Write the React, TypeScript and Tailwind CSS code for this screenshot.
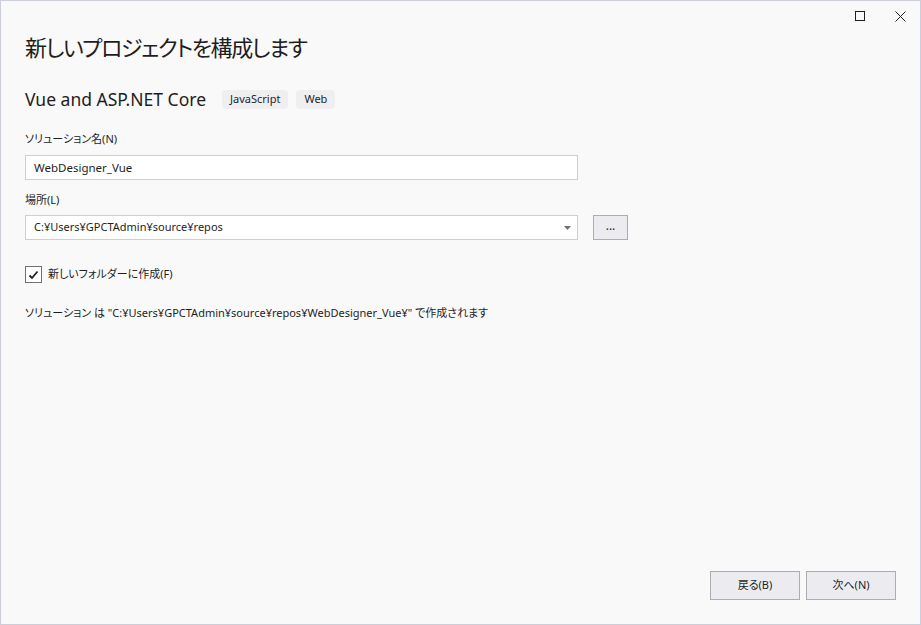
import React from "react";

export default function App() {
  const font = { fontFamily: '"Noto Sans", "Noto Sans CJK JP", sans-serif' };
  return (
    <div
      className="w-[921px] h-[625px] bg-[#f9f9f9] border border-[#cccedb] box-border flex flex-col text-[#1e1e1e] relative overflow-hidden [font-feature-settings:'palt']"
      style={font}
    >
      {/* window controls */}
      <div className="absolute top-0 right-0 flex">
        <div className="w-[40px] h-[30px] flex items-center justify-center">
          <div className="w-[10px] h-[10px] border border-[#1e1e1e]" />
        </div>
        <div className="w-[40px] h-[30px] flex items-center justify-center">
          <svg width="11" height="11" viewBox="0 0 11 11">
            <path d="M0.5 0.5 L10.5 10.5 M10.5 0.5 L0.5 10.5" stroke="#1e1e1e" strokeWidth="1" />
          </svg>
        </div>
      </div>

      <div className="pl-[24px] pt-[30px] flex flex-col flex-1">
        <div className="text-[22px] leading-[32px] h-[32px] tracking-[-1.4px]">新しいプロジェクトを構成します</div>

        <div className="flex items-center mt-[24px] h-[24px]">
          <span className="text-[17.5px] leading-[24px]">Vue and ASP.NET Core</span>
          <span className="ml-[16px] bg-[#efeff2] rounded-[4px] text-[11px] px-[8px] h-[19px] flex items-center">JavaScript</span>
          <span className="ml-[8px] bg-[#efeff2] rounded-[4px] text-[11px] px-[8px] h-[19px] flex items-center">Web</span>
        </div>

        <div className="mt-[19px] text-[11px] leading-[18px]">ソリューション名(N)</div>
        <div className="mt-[7px] w-[553px] h-[25px] bg-white border border-[#cccedb] flex items-center px-[8px] text-[11.5px]">
          WebDesigner_Vue
        </div>

        <div className="mt-[11px] text-[11px] leading-[18px]">場所(L)</div>
        <div className="mt-[6px] flex items-center">
          <div className="w-[553px] h-[25px] bg-white border border-[#cccedb] flex items-center pl-[8px] pr-[6px] text-[11px]">
            <span className="flex-1">C:¥Users¥GPCTAdmin¥source¥repos</span>
            <svg width="7" height="4" viewBox="0 0 7 4">
              <path d="M0 0 H7 L3.5 4 Z" fill="#717171" />
            </svg>
          </div>
          <div className="ml-[15px] w-[35px] h-[25px] bg-[#ececf0] border border-[#adadad] flex items-center justify-center text-[12px] leading-none pb-[3px]">
            ...
          </div>
        </div>

        <div className="mt-[26px] flex items-center h-[17px]">
          <div className="w-[17px] h-[17px] border border-[#717171] bg-white flex items-center justify-center">
            <svg width="11" height="10" viewBox="0 0 11 10">
              <path d="M1.5 5.5 L4 8 L9.5 1.5" stroke="#1e1e1e" strokeWidth="1.8" fill="none" />
            </svg>
          </div>
          <span className="ml-[6px] text-[11px]">新しいフォルダーに作成(F)</span>
        </div>

        <div className="mt-[21px] text-[11px] leading-[18px]">
          ソリューション は "C:¥Users¥GPCTAdmin¥source¥repos¥WebDesigner_Vue¥" で作成されます
        </div>

        <div className="flex-1" />

        <div className="flex justify-end pr-[24px] pb-[24px] gap-[6px]">
          <div className="w-[90px] h-[29px] bg-[#ececf0] border border-[#adadad] flex items-center justify-center text-[11px]">
            戻る(B)
          </div>
          <div className="w-[90px] h-[29px] bg-[#ececf0] border border-[#adadad] flex items-center justify-center text-[11px]">
            次へ(N)
          </div>
        </div>
      </div>
    </div>
  );
}
